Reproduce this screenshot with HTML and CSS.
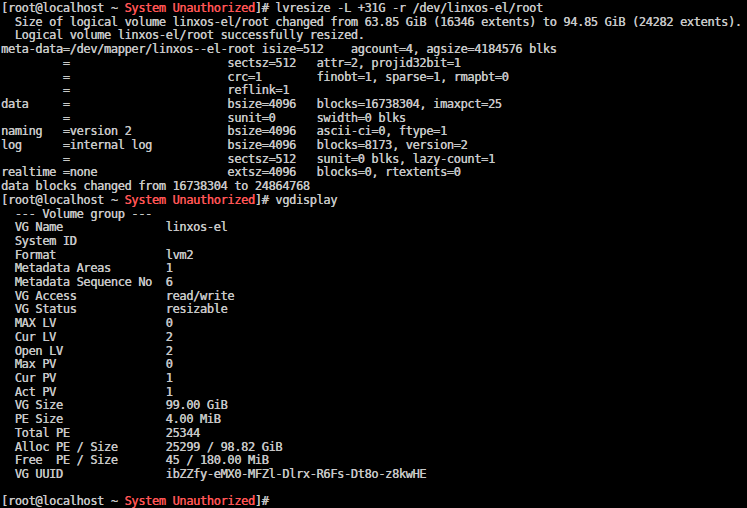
FILE: index.html
```html
<!DOCTYPE html>
<html>
<head>
<meta charset="utf-8">
<link rel="stylesheet" href="styles.css">
</head>
<body>
<pre class="term">[root@localhost ~ <span class="red">System Unauthorized</span>]# lvresize -L +31G -r /dev/linxos-el/root
  Size of logical volume linxos-el/root changed from 63.85 GiB (16346 extents) to 94.85 GiB (24282 extents).
  Logical volume linxos-el/root successfully resized.
meta-data=/dev/mapper/linxos--el-root isize=512    agcount=4, agsize=4184576 blks
         =                       sectsz=512   attr=2, projid32bit=1
         =                       crc=1        finobt=1, sparse=1, rmapbt=0
         =                       reflink=1
data     =                       bsize=4096   blocks=16738304, imaxpct=25
         =                       sunit=0      swidth=0 blks
naming   =version 2              bsize=4096   ascii-ci=0, ftype=1
log      =internal log           bsize=4096   blocks=8173, version=2
         =                       sectsz=512   sunit=0 blks, lazy-count=1
realtime =none                   extsz=4096   blocks=0, rtextents=0
data blocks changed from 16738304 to 24864768
[root@localhost ~ <span class="red">System Unauthorized</span>]# vgdisplay
  --- Volume group ---
  VG Name               linxos-el
  System ID
  Format                lvm2
  Metadata Areas        1
  Metadata Sequence No  6
  VG Access             read/write
  VG Status             resizable
  MAX LV                0
  Cur LV                2
  Open LV               2
  Max PV                0
  Cur PV                1
  Act PV                1
  VG Size               99.00 GiB
  PE Size               4.00 MiB
  Total PE              25344
  Alloc PE / Size       25299 / 98.82 GiB
  Free  PE / Size       45 / 180.00 MiB
  VG UUID               ibZZfy-eMX0-MFZl-Dlrx-R6Fs-Dt8o-z8kwHE

[root@localhost ~ <span class="red">System Unauthorized</span>]#</pre>
</body>
</html>
```
FILE: styles.css
```css
html, body {
  margin: 0;
  padding: 0;
  background: #000;
  height: 100%;
  overflow: hidden;
}
.term {
  margin: 0;
  padding: 2px 0 0 1px;
  font-family: "DejaVu Sans Mono", "Liberation Mono", monospace;
  font-size: 12px;
  letter-spacing: -0.367px;
  line-height: 13.71px;
  color: #c8c8c8;
  white-space: pre;
  text-shadow: 0.3px 0 0 currentColor;
}
.red {
  color: #ff5555;
}
```
